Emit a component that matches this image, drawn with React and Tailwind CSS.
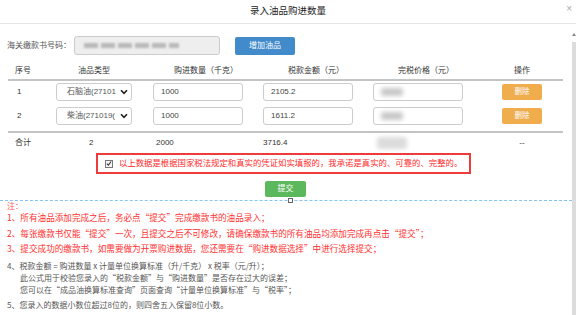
import React from "react";

const rows = [
  { no: "1", oil: "石脑油(27101", qty: "1000", tax: "2105.2" },
  { no: "2", oil: "柴油(271019(", qty: "1000", tax: "1611.2" },
];

const Chevron = () => (
  <svg width="8" height="6" viewBox="0 0 8 6" className="shrink-0">
    <path d="M1 1.2 L4 4.4 L7 1.2" fill="none" stroke="#222" strokeWidth="1.6" />
  </svg>
);

const Blur = ({ className }) => (
  <div className={"rounded-[3px] bg-[#c8c8c8] blur-[2px] " + className} />
);

export default function App() {
  return (
    <div className="w-[576px] h-[315px] overflow-hidden bg-white text-[#333] font-['Liberation_Sans','Noto_Sans_CJK_SC',sans-serif]">
      {/* dialog title */}
      <div className="relative flex h-[24px] items-center justify-center border-b border-[#e5e5e5]">
        <span className="text-[9.5px] text-[#222]">录入油品购进数量</span>
        <span className="absolute right-[4px] top-[4px] text-[10px] leading-[10px] text-[#aaa]">×</span>
      </div>

      <div className="flex h-[291px]">
        <div className="flex-1">
          {/* customs number */}
          <div className="mt-[12px] flex h-[19px] items-center pl-[7px]">
            <span className="w-[67px] text-[8px] text-[#555]">海关缴款书号码：</span>
            <div className="flex h-[19px] w-[146px] items-center gap-[3px] rounded-[3px] border border-[#ccc] bg-[#eee] pl-[9px]">
              <div className="h-[5px] w-[14px] bg-[#b9b9b9] blur-[1px]" />
              <div className="h-[5px] w-[14px] bg-[#b9b9b9] blur-[1px]" />
              <div className="h-[5px] w-[14px] bg-[#b9b9b9] blur-[1px]" />
              <div className="h-[5px] w-[14px] bg-[#b9b9b9] blur-[1px]" />
              <div className="h-[5px] w-[14px] bg-[#b9b9b9] blur-[1px]" />
              <div className="h-[5px] w-[10px] bg-[#b9b9b9] blur-[1px]" />
            </div>
            <button className="ml-[15px] flex h-[18px] w-[60px] items-center justify-center rounded-[2px] bg-[#428bca] text-[8px] text-white">
              增加油品
            </button>
          </div>

          {/* table */}
          <div className="ml-[8px] mt-[8px] w-[555px]">
            <div className="grid h-[18px] grid-cols-[45px_98px_110px_110px_110px_82px] items-center border-b-2 border-[#c4c4c4] text-[8px]">
              <span className="pl-[7px]">序号</span>
              <span className="pl-[25px]">油品类型</span>
              <span className="text-center">购进数量（千克）</span>
              <span className="text-center">税款金额（元）</span>
              <span className="text-center">完税价格（元）</span>
              <span className="text-center">操作</span>
            </div>

            <div className="flex flex-col gap-[6px] border-b-2 border-[#c4c4c4] pb-[6px] pt-[2px]">
              {rows.map((r) => (
                <div
                  key={r.no}
                  className="grid h-[18px] grid-cols-[45px_98px_110px_110px_110px_82px] items-center text-[8px]"
                >
                  <span className="pl-[9px]">{r.no}</span>
                  <div className="ml-[3px] flex h-[18px] w-[76px] items-center justify-between overflow-hidden rounded-[3px] border border-[#ccc] pl-[10px] pr-[3px] text-[#555]">
                    <span className="overflow-hidden whitespace-nowrap">{r.oil}</span>
                    <Chevron />
                  </div>
                  <div className="ml-[2px] flex h-[18px] w-[90px] items-center rounded-[3px] border border-[#ccc] pl-[7px] text-[#444]">
                    {r.qty}
                  </div>
                  <div className="ml-[2px] flex h-[18px] w-[90px] items-center rounded-[3px] border border-[#ccc] pl-[7px] text-[#444]">
                    {r.tax}
                  </div>
                  <div className="ml-[2px] flex h-[18px] w-[90px] items-center rounded-[3px] border border-[#ccc] pl-[7px]">
                    <Blur className="h-[8px] w-[22px]" />
                  </div>
                  <div className="flex justify-center">
                    <button className="flex h-[16px] w-[40px] items-center justify-center rounded-[2px] bg-[#f0ad4e] text-[7.5px] text-white">
                      删除
                    </button>
                  </div>
                </div>
              ))}
            </div>

            <div className="grid h-[20px] grid-cols-[45px_98px_110px_110px_110px_82px] items-center text-[8px]">
              <span className="pl-[7px]">合计</span>
              <span className="pl-[36px]">2</span>
              <span className="pl-[5px]">2000</span>
              <span className="pl-[2px]">3716.4</span>
              <div className="pl-[6px]">
                <Blur className="h-[12px] w-[30px] bg-[#dcdcdc]" />
              </div>
              <span className="text-center">--</span>
            </div>
          </div>

          {/* promise */}
          <div className="ml-[96px] flex h-[21px] w-[375px] items-center border-2 border-[#ee3b3b] pl-[7px]">
            <div className="mr-[6px] flex h-[8px] w-[8px] items-center justify-center border border-[#777] bg-[#f4f4f4]">
              <svg width="7" height="7" viewBox="0 0 7 7">
                <path d="M1 3.6 L2.8 5.4 L6 1.2" fill="none" stroke="#333" strokeWidth="1.2" />
              </svg>
            </div>
            <span className="whitespace-nowrap text-[8.4px] text-[#ff2b2b]">
              以上数据是根据国家税法规定和真实的凭证如实填报的，我承诺是真实的、可靠的、完整的。
            </span>
          </div>

          <button className="ml-[265px] mt-[7px] flex h-[16px] w-[41px] items-center justify-center rounded-[2px] bg-[#5cb85c] text-[8px] text-white">
            提交
          </button>

          {/* divider */}
          <div className="relative mt-[3px] border-t border-dashed border-[#86c5f0]">
            <div className="absolute left-[288px] top-[-3px] h-[5px] w-[5px] border border-[#666] bg-white" />
          </div>

          {/* notes */}
          <div className="whitespace-nowrap pl-[7px] font-['Noto_Sans_CJK_SC',sans-serif]">
            <div className="h-[9px] text-[8px] leading-[9px] text-[#ff5555]">注：</div>
            <div className="h-[14px] text-[8.6px] leading-[14px] text-[#ff3030]">
              1、所有油品添加完成之后，务必点“提交”完成缴款书的油品录入；
            </div>
            <div className="mt-[2px] h-[14px] text-[8.6px] leading-[14px] text-[#ff3030]">
              2、每张缴款书仅能“提交”一次，且提交之后不可修改，请确保缴款书的所有油品均添加完成再点击“提交”；
            </div>
            <div className="mt-[1px] h-[14px] text-[8.6px] leading-[14px] text-[#ff3030]">
              3、提交成功的缴款书，如需要做为开票购进数据，您还需要在“购进数据选择”中进行选择提交；
            </div>
            <div className="mt-[5px] text-[8px] text-[#555]">
              <div className="h-[12px] leading-[12px]">
                4、税款金额 = 购进数量 x 计量单位换算标准（升/千克） x 税率（元/升）；
              </div>
              <div className="h-[12px] pl-[13px] leading-[12px]">
                此公式用于校验您录入的“税款金额”与“购进数量”是否存在过大的误差；
              </div>
              <div className="h-[11px] pl-[13px] leading-[11px]">
                您可以在“成品油换算标准查询”页面查询“计量单位换算标准”与“税率”；
              </div>
            </div>
            <div className="mt-[4px] h-[12px] text-[8px] leading-[12px] text-[#555]">
              5、您录入的数据小数位超过8位的，则四舍五入保留8位小数。
            </div>
          </div>
        </div>

        {/* scrollbar */}
        <div className="flex w-[4px] flex-col items-center pt-[9px]">
          <div className="h-0 w-0 border-x-[2px] border-b-[3px] border-x-transparent border-b-[#888]" />
          <div className="mt-[6px] w-[4px] flex-1 bg-[#dcdcdc]" />
        </div>
      </div>
    </div>
  );
}
